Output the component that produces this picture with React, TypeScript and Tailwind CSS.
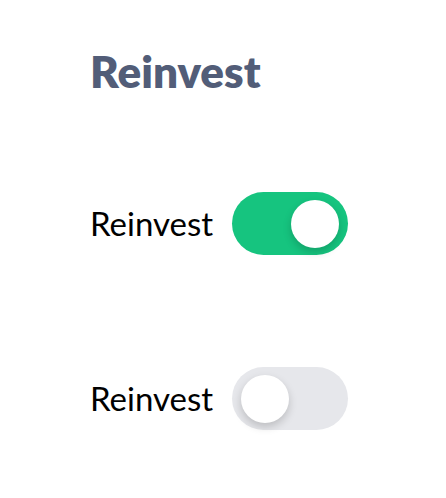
import { useState } from 'react';

function Toggle({ on, onChange }: { on: boolean; onChange: () => void }) {
  return (
    <button
      type="button"
      onClick={onChange}
      className={`flex items-center w-[116px] h-[63px] rounded-full px-[9px] ${
        on ? 'bg-[#16c47f] justify-end' : 'bg-[#e6e7eb] justify-start'
      }`}
    >
      <span className="block w-[48px] h-[48px] rounded-full bg-white shadow-[0_4px_8px_rgba(0,0,0,0.18)]" />
    </button>
  );
}

export default function App() {
  const [a, setA] = useState(true);
  const [b, setB] = useState(false);

  return (
    <div className="min-h-[498px] bg-white pl-[90px] pt-[42px] font-['Lato',sans-serif]">
      <h1 className="text-[44px] font-extrabold leading-[58px] text-[#525d78]">Reinvest</h1>

      <div className="mt-[92px] flex items-center gap-[19px]">
        <span className="text-[33px] text-black">Reinvest</span>
        <Toggle on={a} onChange={() => setA(!a)} />
      </div>

      <div className="mt-[112px] flex items-center gap-[19px]">
        <span className="text-[33px] text-black">Reinvest</span>
        <Toggle on={b} onChange={() => setB(!b)} />
      </div>
    </div>
  );
}
